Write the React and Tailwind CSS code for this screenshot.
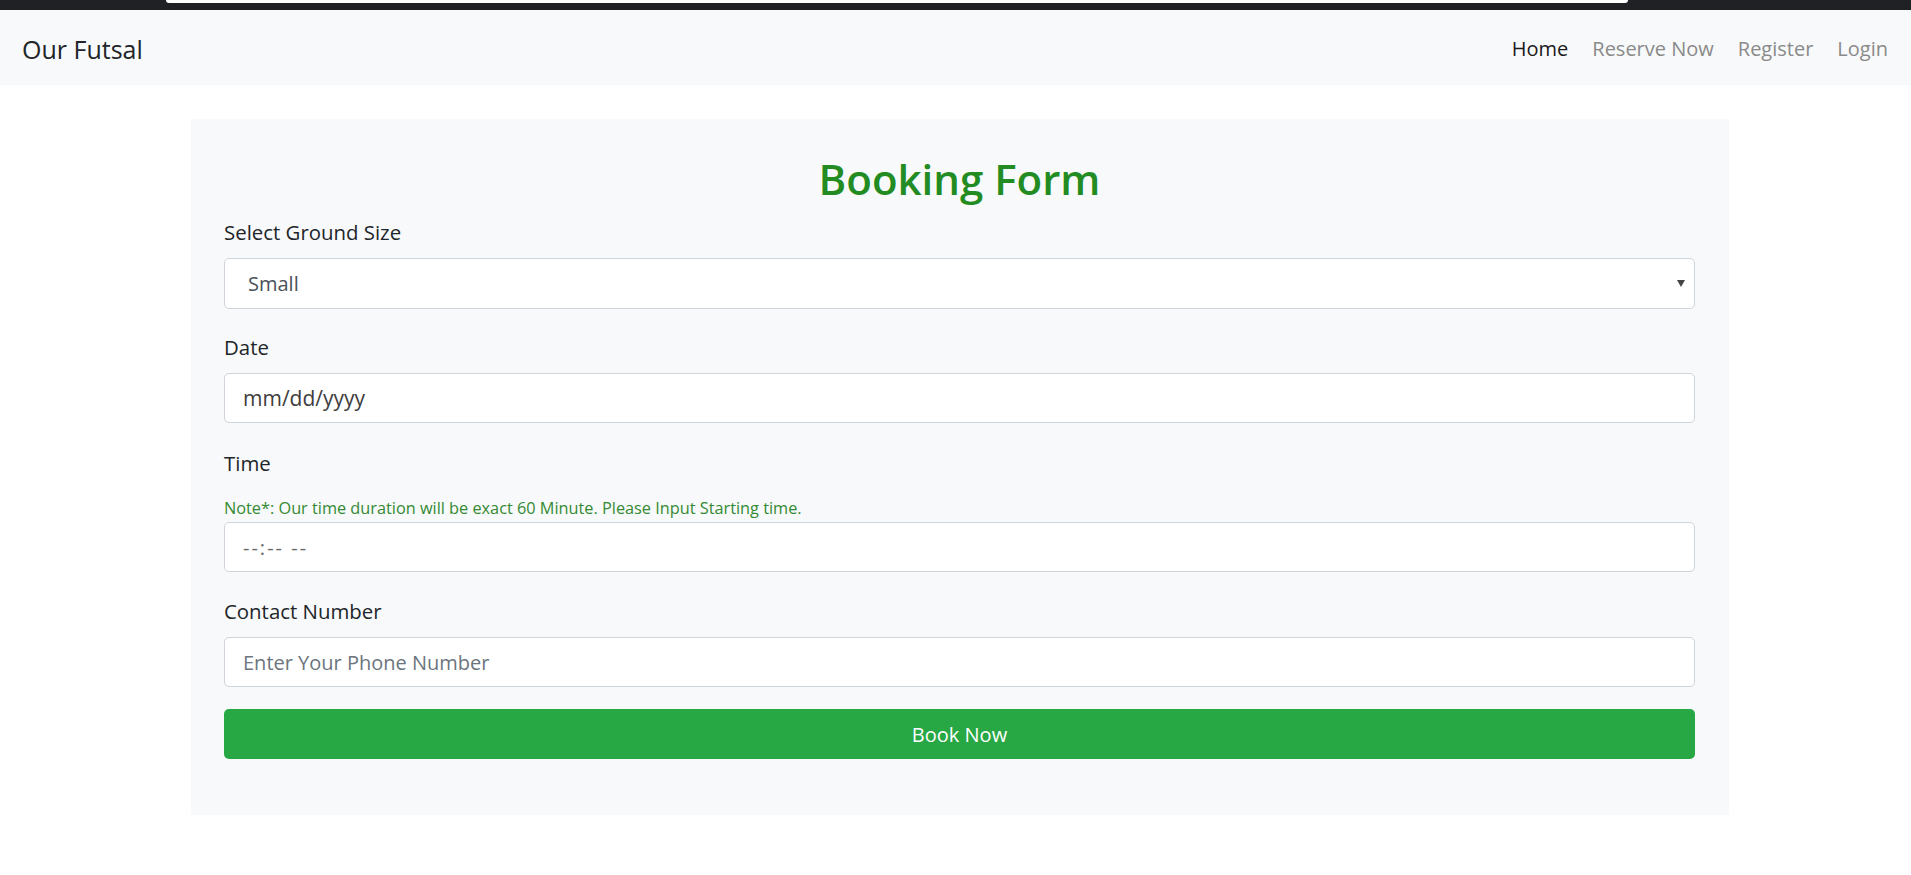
import { useState } from "react"

function TopBar() {
  return (
    <div className="h-[10px] bg-[#202124] flex">
      <div className="ml-[166px] w-[1462px] h-[3px] bg-white rounded-b-[10px]"></div>
    </div>
  )
}

function Navbar() {
  const links = ["Home", "Reserve Now", "Register", "Login"]

  return (
    <nav className="h-[75px] bg-[#f8f9fa] flex items-center justify-between pl-[22px] pr-[11px]">
      <a href="#" className="text-[25px] leading-[38px] text-[#212529] pt-[2px]">
        Our Futsal
      </a>
      <ul className="flex items-center pt-[2px]">
        {links.map((link, i) => (
          <li key={link}>
            <a
              href="#"
              className={`block px-[12px] text-[20px] leading-[30px] ${
                i === 0 ? "text-[#1a1a1a]" : "text-[#8a8a8a]"
              }`}
            >
              {link}
            </a>
          </li>
        ))}
      </ul>
    </nav>
  )
}

function Label({ children }) {
  return (
    <label className="block text-[20.4px] leading-[30px] text-[#212529] mb-[11px]">
      {children}
    </label>
  )
}

function BookingForm() {
  const [size, setSize] = useState("small")

  return (
    <div className="ml-[191px] mt-[34px] w-[1538px] bg-[#f8f9fa] pt-[33px] pb-[56px] pl-[33px] pr-[34px]">
      <h1 className="text-center text-[42px] leading-[53px] font-semibold text-[#228b22] mb-[12px]">
        Booking Form
      </h1>

      <form onSubmit={(e) => e.preventDefault()}>
        <div className="mb-[23px]">
          <Label>Select Ground Size</Label>
          <div className="relative">
            <select
              value={size}
              onChange={(e) => setSize(e.target.value)}
              className="appearance-none w-full h-[51px] bg-white border border-[#ced4da] rounded-[5px] pl-[23px] pr-[30px] text-[20px] text-[#495057] outline-none"
            >
              <option value="small">Small</option>
              <option value="medium">Medium</option>
              <option value="large">Large</option>
            </select>
            <svg
              className="absolute right-[10px] top-[22px] pointer-events-none"
              width="8"
              height="7"
              viewBox="0 0 8 7"
            >
              <path d="M0 0 H8 L4 7 Z" fill="#444" />
            </svg>
          </div>
        </div>

        <div className="mb-[25px]">
          <Label>Date</Label>
          <input
            type="text"
            placeholder="mm/dd/yyyy"
            className="w-full h-[50px] bg-white border border-[#ced4da] rounded-[5px] px-[18px] text-[21px] text-[#212529] placeholder:text-[#3d3d3d] outline-none"
          />
        </div>

        <div className="mb-[24px]">
          <label className="block text-[20.4px] leading-[30px] text-[#212529]">Time</label>
          <p className="text-[16.3px] leading-[24px] text-[#338a33] mt-[18px] mb-[2px]">
            Note*: Our time duration will be exact 60 Minute. Please Input Starting time.
          </p>
          <input
            type="text"
            placeholder="--:-- --"
            className="w-full h-[50px] bg-white border border-[#ced4da] rounded-[5px] px-[18px] text-[20px] tracking-[2px] text-[#212529] placeholder:text-[#6a6a6a] outline-none"
          />
        </div>

        <div className="mb-[22px]">
          <Label>Contact Number</Label>
          <input
            type="tel"
            placeholder="Enter Your Phone Number"
            className="w-full h-[50px] bg-white border border-[#ced4da] rounded-[5px] px-[18px] text-[20px] text-[#212529] placeholder:text-[#6c757d] outline-none"
          />
        </div>

        <button
          type="submit"
          className="w-full h-[50px] bg-[#28a745] text-white text-[20px] pt-[2px] rounded-[5px] cursor-pointer"
        >
          Book Now
        </button>
      </form>
    </div>
  )
}

export default function App() {
  return (
    <div className="min-h-[875px] bg-white font-['Open_Sans',sans-serif]">
      <TopBar />
      <Navbar />
      <BookingForm />
    </div>
  )
}
